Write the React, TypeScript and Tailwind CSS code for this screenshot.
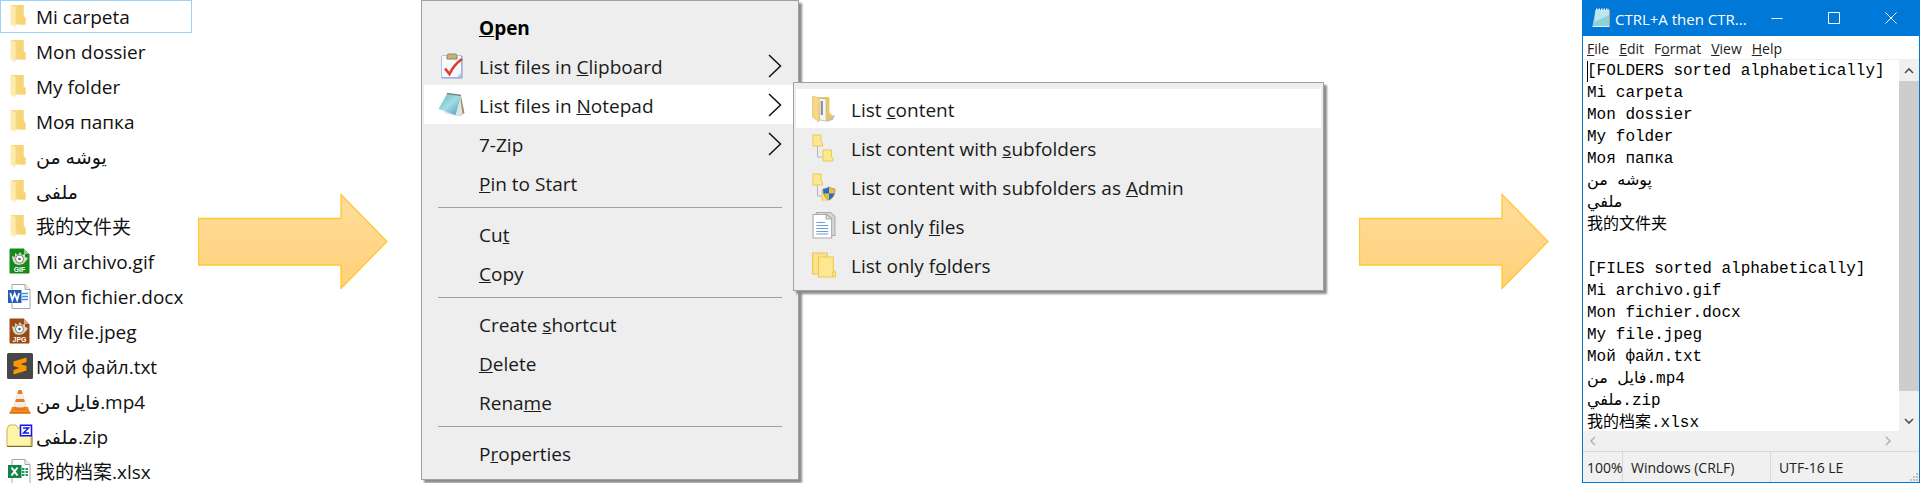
import type { ReactNode } from "react";

const UI = "font-['Open_Sans','Noto_Sans','DejaVu_Sans','Noto_Sans_CJK_SC',sans-serif]";

function FolderIcon() {
  return (
    <svg width="20" height="24" viewBox="0 0 20 24" aria-hidden="true">
      <path d="M1 1h12.500v11l2 2v6.500H3z" fill="#f5d77f" />
      <path d="M9 1h4.500v11l2 2v6.500H9z" fill="#f8d572" />
      <path d="M.5 1 5.500 3v20.500L.5 20.500z" fill="#fdebb0" />
    </svg>
  );
}

function ImageFileIcon({ color, label }: { color: string; label: string }) {
  return (
    <svg width="21" height="26" viewBox="0 0 21 26" aria-hidden="true">
      <path d="M1 1h14l5 5v19H1z" fill={color} stroke={color} />
      <path d="M15 .5v5.500h5.500z" fill="#fff" opacity=".55" />
      <path d="M3 8l3 1 0-4 3 2 2-3 2 3 3-1 0 3 3 1-2 3-3 3-4 1-4-1-2-3z" fill="#d5ddca" />
      <circle cx="10.500" cy="11" r="4" fill="#fff" stroke="#7a8471" />
      <circle cx="10.500" cy="11" r="1.300" fill="#55614c" />
      <text x="10.500" y="23.500" textAnchor="middle" fontSize="7" fontWeight="700" fontFamily="Liberation Sans, sans-serif" fill="#fff">
        {label}
      </text>
    </svg>
  );
}

function PageShape() {
  return (
    <>
      <path d="M4 .5h13l5 5v19H4z" fill="#fff" stroke="#a3a7ab" />
      <path d="M17 .5v5h5" fill="#eee" stroke="#a3a7ab" />
    </>
  );
}

function WordIcon() {
  return (
    <svg width="23" height="25" viewBox="0 0 23 25" aria-hidden="true">
      <PageShape />
      <path d="M14 9.500h6M14 12.500h6M14 15.500h6" stroke="#4a90d9" strokeWidth="1.300" />
      <path d="M0 6h13.500v13H0z" fill="#1f5fb8" />
      <path d="M2.300 9l2 7 2.400-6.500L9.200 16l2-7" fill="none" stroke="#fff" strokeWidth="1.800" />
    </svg>
  );
}

function ExcelIcon() {
  return (
    <svg width="23" height="25" viewBox="0 0 23 25" aria-hidden="true">
      <PageShape />
      <path d="M14 10h2.500M17.500 10H20M14 13h2.500M17.500 13H20M14 16h2.500M17.500 16H20" stroke="#21975a" strokeWidth="1.800" />
      <path d="M0 6h13.500v13H0z" fill="#14834a" />
      <path d="M3.500 8.500l6 8M9.500 8.500l-6 8" fill="none" stroke="#fff" strokeWidth="2" />
    </svg>
  );
}

function SublimeIcon() {
  return (
    <svg width="26" height="26" viewBox="0 0 26 26" aria-hidden="true">
      <rect width="26" height="26" rx="1.500" fill="#474747" />
      <path d="M6.500 8.500 19.500 4.500v4.500l-6 2 6 2v4.500L6.500 21.500V17l6-2-6-2z" fill="#ff9800" />
    </svg>
  );
}

function ConeIcon() {
  return (
    <svg width="22" height="25" viewBox="0 0 22 25" aria-hidden="true">
      <path d="M3 18h16l2.500 6.500H.5z" fill="#f28a1c" />
      <path d="M.5 24h21" stroke="#c65d07" />
      <path d="M9.500 1h3L18 20q-7 3-14 0z" fill="#f1791b" />
      <path d="M8.300 5h5.400l1.500 5H6.800zM5.900 13h10.200l1.200 4.500q-6.300 2-12.600 0z" fill="#eef0f0" />
    </svg>
  );
}

function ZipIcon() {
  return (
    <svg width="27" height="24" viewBox="0 0 27 24" aria-hidden="true">
      <path d="M1 6q0-2 1-3l1-2h7l2 3h13v18H1z" fill="#fdf5a8" stroke="#c9b35c" />
      <path d="M1 22.500h25V12" fill="none" stroke="#7c6d35" />
      <path d="M14.500 1.200h11v10.500h-11z" fill="#fff" stroke="#1414f0" strokeWidth="1.600" />
      <path d="M17 4h5.500l-5 5H23" fill="none" stroke="#1414f0" strokeWidth="1.500" />
    </svg>
  );
}

function ClipboardIcon() {
  return (
    <svg width="26" height="26" viewBox="0 0 26 26" aria-hidden="true">
      <path d="M3 3h20v22H3z" fill="#b5cdf0" stroke="#7e9bd0" />
      <path d="M3 3h19v17l-4 4H3z" fill="#f5f9ff" />
      <path d="M8 2.500q0-1.500 2-1.500h6q2 0 2 1.500V6H8z" fill="#c6b477" stroke="#8f8255" />
      <path d="M6 15.500l4.500 5.500Q15 11.500 23 6" fill="none" stroke="#e33b25" strokeWidth="2.600" />
    </svg>
  );
}

function NotepadMenuIcon() {
  return (
    <svg width="27" height="26" viewBox="0 0 27 26" aria-hidden="true">
      <defs>
        <linearGradient id="pad" x1="0" y1="0" x2="1" y2="1">
          <stop offset="0" stopColor="#5fb3c2" />
          <stop offset=".5" stopColor="#a5dce4" />
          <stop offset="1" stopColor="#3f9cb0" />
        </linearGradient>
      </defs>
      <path d="M23 4l3.500 17-5 3-3-1z" fill="#a48c66" />
      <path d="M22 4l2.500 18-4.500 2.500L6 21z" fill="#dce4e8" />
      <path d="M9 2l14 2-5.500 19L.5 17z" fill="url(#pad)" />
      <path d="M9 1.500l14 2" stroke="#7a8487" strokeWidth="1.500" />
    </svg>
  );
}

function OpenFolderIcon() {
  return (
    <svg width="24" height="28" viewBox="0 0 22 28" preserveAspectRatio="none" aria-hidden="true">
      <path d="M14 22l7-2-2 5-6 2z" fill="#bdbdbd" />
      <path d="M5 2h11v16l2 1v5l-9 1z" fill="#f0c55c" />
      <path d="M6 3l7 1v22l-6-1z" fill="#f4f4f2" stroke="#b7b19d" strokeWidth=".7" />
      <path d="M9 6v14" stroke="#8b9098" strokeWidth="2" />
      <path d="M.5 1 6.500 3v24L.5 22z" fill="#f6d888" stroke="#dcb75f" strokeWidth=".6" />
    </svg>
  );
}

function TreeShape() {
  return (
    <>
      <path d="M5.500 12v11H10" fill="none" stroke="#b4b4b4" />
      <path d="M1 1h8v7l1.500 1v3H1z" fill="#fde792" stroke="#ecc94e" />
    </>
  );
}

function SubfolderIcon() {
  return (
    <svg width="24" height="28" viewBox="0 0 24 28" aria-hidden="true">
      <TreeShape />
      <path d="M11 16h8.500v7l1.500 1v3H11z" fill="#fde792" stroke="#ecc94e" />
    </svg>
  );
}

function AdminIcon() {
  return (
    <svg width="24" height="28" viewBox="0 0 24 28" aria-hidden="true">
      <TreeShape />
      <path d="M10 17h8v10h-8z" fill="#fde792" stroke="#ecc94e" />
      <path d="M17 14q3 2 6 2 0 8-6 11-6-3-6-11 3 0 6-2z" fill="#f7bd35" />
      <path d="M17 14v6.500h-5.700Q11 18 11 16q3 0 6-2zM17 20.500h5.600Q21.500 25 17 27z" fill="#1c6fd0" />
      <path d="M17 14q3 2 6 2 0 8-6 11-6-3-6-11 3 0 6-2z" fill="none" stroke="#7d8791" strokeWidth=".8" />
    </svg>
  );
}

function FilesIcon() {
  return (
    <svg width="24" height="27" viewBox="0 0 22 27" preserveAspectRatio="none" aria-hidden="true">
      <path d="M4 .5h13l4 4v19H4z" fill="#d9d9d9" stroke="#aaa" />
      <path d="M1 2.500h13l4 4V26H1z" fill="#fff" stroke="#aaa" />
      <path d="M13 2l5 5h-5z" fill="#e0e0e0" stroke="#aaa" />
      <path d="M4 10.500h8M4 13.500h11M4 16.500h11M4 19.500h11M4 22h11" stroke="#6c9fd6" />
    </svg>
  );
}

function FoldersIcon() {
  return (
    <svg width="24" height="26" viewBox="0 0 22 26" preserveAspectRatio="none" aria-hidden="true">
      <path d="M.5 1h13.500v21H.5z" fill="#fbe28a" stroke="#e9c452" />
      <path d="M6 5h13.500v13l2 2v5H6z" fill="#fde792" stroke="#ecc94e" />
      <path d="M19 25v-5h2.500" fill="none" stroke="#ecc94e" />
    </svg>
  );
}

function NotepadTitleIcon() {
  return (
    <svg width="19" height="20" viewBox="0 0 19 20" aria-hidden="true">
      <path d="M15 2h3v17H1z" fill="#b79d79" />
      <path d="M3.500 2H17v16H.5z" fill="#8fd0dd" />
      <path d="M3.500 2H17v5L2.500 14z" fill="#b9e7ef" />
      <path d="M4 1.500h13" stroke="#eef6f7" strokeWidth="2" strokeDasharray="1.500 1" />
      <path d="M.5 18.500H17" stroke="#e8f1f2" />
    </svg>
  );
}

function Chevron() {
  return (
    <svg width="14" height="24" viewBox="0 0 14 24" fill="none" stroke="#111" strokeWidth="1.500" aria-hidden="true">
      <path d="M1 1l11.500 11L1 23" />
    </svg>
  );
}

function Arrow({ id }: { id: string }) {
  return (
    <svg className="mt-[193px] h-24 min-w-0 flex-1" viewBox="0 0 190 96" preserveAspectRatio="none" aria-hidden="true">
      <defs>
        <linearGradient id={id} x1="0" y1="0" x2="0" y2="1">
          <stop offset="0" stopColor="#ffdd9c" />
          <stop offset="1" stopColor="#ffd078" />
        </linearGradient>
      </defs>
      <path d="M.5 25.500h142.500V1.500L189 48.500l-46 47V72H.5z" fill={`url(#${id})`} stroke="#ffc832" strokeWidth="1.300" />
    </svg>
  );
}

const files: { name: string; icon: ReactNode }[] = [
  { name: "Mi carpeta", icon: <FolderIcon /> },
  { name: "Mon dossier", icon: <FolderIcon /> },
  { name: "My folder", icon: <FolderIcon /> },
  { name: "Моя папка", icon: <FolderIcon /> },
  { name: "يوشه من", icon: <FolderIcon /> },
  { name: "ملفى", icon: <FolderIcon /> },
  { name: "我的文件夹", icon: <FolderIcon /> },
  { name: "Mi archivo.gif", icon: <ImageFileIcon color="#148a1b" label="GIF" /> },
  { name: "Mon fichier.docx", icon: <WordIcon /> },
  { name: "My file.jpeg", icon: <ImageFileIcon color="#9c4a14" label="JPG" /> },
  { name: "Мой файл.txt", icon: <SublimeIcon /> },
  { name: "فايل من.mp4", icon: <ConeIcon /> },
  { name: "ملفى.zip", icon: <ZipIcon /> },
  { name: "我的档案.xlsx", icon: <ExcelIcon /> },
];

function FileList() {
  return (
    <ul className="flex w-48 shrink-0 flex-col gap-0.5">
      {files.map((f) => (
        <li key={f.name} className="h-[33px] border border-transparent first:border-[#99d1ff] last:h-7">
          <button className="flex h-8 w-full items-center text-left">
            <span className="flex h-8 w-[35px] shrink-0 items-center justify-center pl-0.5 pb-0.5">{f.icon}</span>
            <span dir="ltr" className="text-[19px] leading-5 whitespace-nowrap text-[#111]">
              {f.name}
            </span>
          </button>
        </li>
      ))}
    </ul>
  );
}

type ItemProps = { children: ReactNode; icon?: ReactNode; arrow?: boolean; active?: boolean; bold?: boolean };

function Item({ children, icon, arrow, active, bold }: ItemProps) {
  return (
    <button
      role="menuitem"
      className={`flex h-[39px] w-full items-center pr-3.5 text-left text-[19px] text-[#1a1a1a] ${active ? "bg-white" : ""} ${bold ? "font-bold text-black" : ""}`}
    >
      <span className="flex w-[55px] shrink-0 justify-center">{icon}</span>
      <span className="flex-1 pt-1 whitespace-nowrap">{children}</span>
      {arrow && <Chevron />}
    </button>
  );
}

function Separator() {
  return <hr className="mx-3.5 mt-[5px] mb-1.5 border-[#a0a0a0]" />;
}

const panel = "border border-[#a0a0a0] bg-[#eeeeee] px-0.5 shadow-[3px_3px_2px_#8c8c8c]";

function ContextMenu() {
  return (
    <div className="relative mr-[560px] ml-[33px] w-[378px] shrink-0">
      <div role="menu" className={`${panel} pt-1.5 pb-[7px]`}>
        <Item bold><u>O</u>pen</Item>
        <Item icon={<ClipboardIcon />} arrow>List files in <u>C</u>lipboard</Item>
        <Item icon={<NotepadMenuIcon />} arrow active>List files in <u>N</u>otepad</Item>
        <Item arrow>7-Zip</Item>
        <Item><u>P</u>in to Start</Item>
        <Separator />
        <Item>Cu<u>t</u></Item>
        <Item><u>C</u>opy</Item>
        <Separator />
        <Item>Create <u>s</u>hortcut</Item>
        <Item><u>D</u>elete</Item>
        <Item>Rena<u>m</u>e</Item>
        <Separator />
        <Item>P<u>r</u>operties</Item>
      </div>
      <div role="menu" className={`${panel} absolute top-[82px] left-[372px] w-[531px] pt-1.5 pb-1.5`}>
        <Item icon={<OpenFolderIcon />} active>List <u>c</u>ontent</Item>
        <Item icon={<SubfolderIcon />}>List content with <u>s</u>ubfolders</Item>
        <Item icon={<AdminIcon />}>List content with subfolders as <u>A</u>dmin</Item>
        <Item icon={<FilesIcon />}>List only <u>f</u>iles</Item>
        <Item icon={<FoldersIcon />}>List only f<u>o</u>lders</Item>
      </div>
    </div>
  );
}

const noteText = `[FOLDERS sorted alphabetically]
Mi carpeta
Mon dossier
My folder
Моя папка
پوشه من
ملفي
我的文件夹

[FILES sorted alphabetically]
Mi archivo.gif
Mon fichier.docx
My file.jpeg
Мой файл.txt
فايل من.mp4
ملفي.zip
我的档案.xlsx`;

function Stroke({ d, size, color, width }: { d: string; size: number; color: string; width: number }) {
  return (
    <svg width={size} height={size} viewBox="0 0 12 12" fill="none" stroke={color} strokeWidth={width} aria-hidden="true">
      <path d={d} />
    </svg>
  );
}

function NotepadWindow() {
  const caption = "flex h-full w-[57px] shrink-0 items-center justify-center";
  return (
    <section className="ml-[33px] flex w-[338px] shrink-0 flex-col border border-t-0 border-[#0078d7]">
      <header className="flex h-9 items-center bg-[#0078d7] pl-[9px] text-white">
        <NotepadTitleIcon />
        <h1 className="ml-1 min-w-0 flex-1 pt-0.5 text-[15px] whitespace-nowrap">CTRL+A then CTR...</h1>
        <button aria-label="Minimize" className={caption}><Stroke d="M.5 6.500h11" size={12} color="#fff" width={1} /></button>
        <button aria-label="Maximize" className={caption}><Stroke d="M.5.5h11v11H.5z" size={12} color="#fff" width={1} /></button>
        <button aria-label="Close" className={caption}><Stroke d="M.5.5l11 11M11.500.5l-11 11" size={12} color="#fff" width={1} /></button>
      </header>
      <nav className="flex h-[23px] items-center gap-2.5 bg-white pt-0.5 pl-1 text-sm text-[#222]">
        <button><u>F</u>ile</button>
        <button><u>E</u>dit</button>
        <button>F<u>o</u>rmat</button>
        <button><u>V</u>iew</button>
        <button><u>H</u>elp</button>
      </nav>
      <div className="flex h-[372px] border-t border-[#eeeeee]">
        <div className="relative min-w-0 flex-1">
          <textarea
            aria-label="Document"
            dir="ltr"
            wrap="off"
            defaultValue={noteText}
            className="block h-full w-full resize-none overflow-hidden border-0 bg-white p-0 pl-1 font-['Liberation_Mono','DejaVu_Sans','Noto_Sans_CJK_SC',monospace] text-base leading-[22px] text-black outline-none"
          />
          <span className="absolute top-px left-1 h-[21px] w-px bg-black" />
        </div>
        <div className="flex w-5 flex-col bg-[#f0f0f0]">
          <button aria-label="Scroll up" className="flex h-[21px] items-center justify-center">
            <Stroke d="M2 8l4-4 4 4" size={12} color="#505050" width={1.6} />
          </button>
          <div className="flex-1 bg-[#cdcdcd]" />
          <div className="h-5" />
          <button aria-label="Scroll down" className="flex h-5 items-center justify-center">
            <Stroke d="M2 4l4 4 4-4" size={12} color="#505050" width={1.6} />
          </button>
        </div>
      </div>
      <div className="flex h-5 items-center justify-between bg-[#f0f0f0] pr-[25px] pl-1">
        <button aria-label="Scroll left"><Stroke d="M8 2L4 6l4 4" size={12} color="#b4b4b4" width={1.6} /></button>
        <button aria-label="Scroll right"><Stroke d="M4 2l4 4-4 4" size={12} color="#b4b4b4" width={1.6} /></button>
      </div>
      <footer className="flex h-[31px] items-stretch border-t border-[#d9d9d9] bg-[#f0f0f0] text-sm leading-8 whitespace-nowrap text-[#222]">
        <span className="w-10 border-r border-[#d9d9d9] pl-1">100%</span>
        <span className="w-[148px] border-r border-[#d9d9d9] pl-2">Windows (CRLF)</span>
        <span className="flex-1 pl-2">UTF-16 LE</span>
        <svg className="self-end" width="10" height="10" viewBox="0 0 10 10" fill="#bfbfbf" aria-hidden="true">
          <path d="M7 1h2v2H7zM7 4h2v2H7zM7 7h2v2H7zM4 4h2v2H4zM4 7h2v2H4zM1 7h2v2H1z" />
        </svg>
      </footer>
    </section>
  );
}

export default function App() {
  return (
    <main className={`flex items-start overflow-x-clip bg-white ${UI}`}>
      <FileList />
      <div className="w-1.5 shrink-0" />
      <Arrow id="arrow-a" />
      <ContextMenu />
      <Arrow id="arrow-b" />
      <NotepadWindow />
    </main>
  );
}
